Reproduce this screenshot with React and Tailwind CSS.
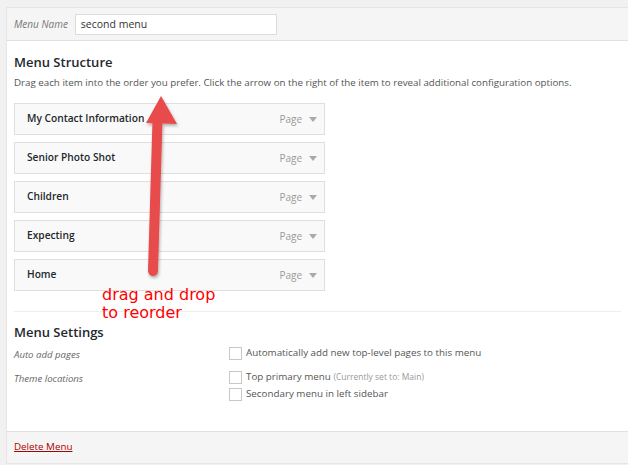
import React from 'react'

const items = ['My Contact Information', 'Senior Photo Shot', 'Children', 'Expecting', 'Home']

function MenuItem({ title }) {
  return (
    <div className="flex h-[32px] w-[311px] items-center justify-between border border-[#dfdfdf] bg-[#f9f9f9] pl-[12px] pr-[7px]">
      <span className="text-[10.2px] font-semibold text-[#23282d]">{title}</span>
      <span className="flex items-center gap-[7px] text-[10px] text-[#999]">
        Page
        <svg width="8" height="6" viewBox="0 0 8 6">
          <path d="M0 1 L8 1 L4 6 Z" fill="#aaa" />
        </svg>
      </span>
    </div>
  )
}

function Checkbox() {
  return <span className="inline-block h-[13px] w-[13px] shrink-0 border border-[#c8c8c8] bg-white" />
}

export default function App() {
  return (
    <div className="relative h-[465px] w-[628px] overflow-hidden bg-[#f1f1f1] pl-[6px] pt-[7px] font-['Open_Sans',sans-serif]">
      <div className="flex h-[457px] flex-col border-b border-l border-t border-[#e5e5e5] bg-white">
        {/* header */}
        <div className="flex h-[33px] items-start gap-[7px] border-b border-[#dfdfdf] bg-[#f5f5f5] pl-[7px] pt-[6px]">
          <span className="mt-[3px] text-[10px] italic text-[#777]">Menu Name</span>
          <div className="flex h-[21px] w-[202px] items-center border border-[#ddd] bg-white px-[5px] text-[10.5px] text-[#333]">
            second menu
          </div>
        </div>

        {/* body */}
        <div className="flex-1 px-[7px]">
          <h3 className="mt-[11px] text-[13px] font-semibold leading-[20px] text-[#23282d]">Menu Structure</h3>
          <p className="mt-[3px] text-[9.75px] leading-[16px] text-[#555]">
            Drag each item into the order you prefer. Click the arrow on the right of the item to reveal additional configuration options.
          </p>
          <div className="mt-[12px] flex flex-col gap-[7px]">
            {items.map((t) => (
              <MenuItem key={t} title={t} />
            ))}
          </div>

          <div className="mt-[20px] border-t border-[#eee]" />
          <h3 className="mt-[10px] text-[13px] font-semibold leading-[20px] text-[#23282d]">Menu Settings</h3>
          <div className="mt-[5px] flex">
            <div className="w-[215px] text-[9.6px] italic leading-[16px] text-[#666]">
              <div className="h-[24px]">Auto add pages</div>
              <div>Theme locations</div>
            </div>
            <div className="flex flex-col text-[9.8px] leading-[16px] text-[#555]">
              <label className="flex h-[24px] items-start gap-[4px]">
                <Checkbox />
                <span className="-mt-[2px]">Automatically add new top-level pages to this menu</span>
              </label>
              <label className="flex h-[17px] items-start gap-[4px]">
                <Checkbox />
                <span className="-mt-[2px]">
                  Top primary menu <span className="text-[8.5px] text-[#999]">(Currently set to: Main)</span>
                </span>
              </label>
              <label className="flex items-start gap-[4px]">
                <Checkbox />
                <span className="-mt-[2px]">Secondary menu in left sidebar</span>
              </label>
            </div>
          </div>
        </div>

        {/* footer */}
        <div className="flex h-[32px] items-center border-t border-[#dfdfdf] bg-[#f5f5f5] px-[7px]">
          <a className="text-[9.8px] text-[#a00] underline">Delete Menu</a>
        </div>
      </div>

      {/* annotation overlay */}
      <svg className="absolute left-0 top-0" width="628" height="465">
        <defs>
          <filter id="sh" x="-50%" y="-10%" width="200%" height="120%">
            <feDropShadow dx="1" dy="2" stdDeviation="1.5" floodColor="#000" floodOpacity="0.3" />
          </filter>
        </defs>
        <g filter="url(#sh)" fill="#e84b4b">
          <line x1="153" y1="271" x2="157.5" y2="120" stroke="#e84b4b" strokeWidth="10" strokeLinecap="round" />
          <polygon points="161,96 177,124 146,123" />
        </g>
      </svg>
      <div className="absolute left-[102px] top-[286px] font-['DejaVu_Sans',sans-serif] text-[16px] leading-[18px] text-[#f00]">
        drag and drop
        <br />
        to reorder
      </div>
    </div>
  )
}
